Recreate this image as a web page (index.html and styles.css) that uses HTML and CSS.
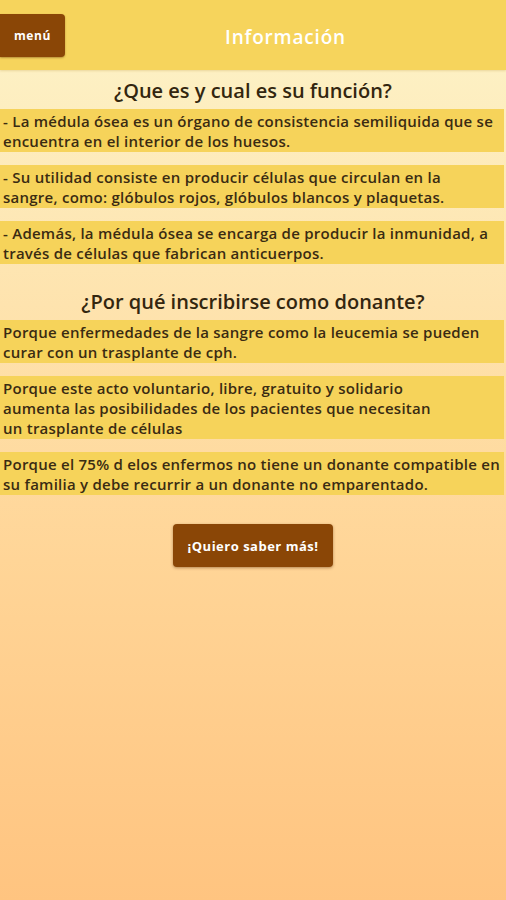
FILE: index.html
```html
<!DOCTYPE html>
<html lang="es">
<head>
<meta charset="utf-8">
<title>Información</title>
<link rel="stylesheet" href="styles.css">
</head>
<body>
<header class="topbar">
  <button class="menu-btn">menú</button>
  <h1 class="title">Información</h1>
</header>
<main class="content">
  <h2 class="section-title">¿Que es y cual es su función?</h2>
  <div class="cards">
    <p class="card">- La médula ósea es un órgano de consistencia semiliquida que se encuentra en el interior de los huesos.</p>
    <p class="card">- Su utilidad consiste en producir células que circulan en la<br>sangre, como: glóbulos rojos, glóbulos blancos y plaquetas.</p>
    <p class="card">- Además, la médula ósea se encarga de producir la inmunidad, a través de células que fabrican anticuerpos.</p>
  </div>
  <h2 class="section-title second">¿Por qué inscribirse como donante?</h2>
  <div class="cards">
    <p class="card">Porque enfermedades de la sangre como la leucemia se pueden curar con un trasplante de cph.</p>
    <p class="card">Porque este acto voluntario, libre, gratuito y solidario<br>aumenta las posibilidades de los pacientes que necesitan<br>un trasplante de células</p>
    <p class="card">Porque el 75% d elos enfermos no tiene un donante compatible en su familia y debe recurrir a un donante no emparentado.</p>
  </div>
  <div class="actions">
    <button class="more-btn">¡Quiero saber más!</button>
  </div>
</main>
</body>
</html>
```

FILE: styles.css
```css
* { box-sizing: border-box; }
html, body { margin: 0; padding: 0; }
body {
  width: 506px;
  min-height: 900px;
  font-family: "Open Sans", "Noto Sans", sans-serif;
  color: #3a2b12;
  background: linear-gradient(to bottom, #fdf0c3 70px, #ffd597 560px, #ffc480 900px);
}
.topbar {
  height: 70px;
  background: #f6d45c;
  display: flex;
  align-items: flex-start;
  box-shadow: 0 1px 2px rgba(180, 140, 40, 0.25);
}
.menu-btn {
  margin-top: 14px;
  width: 65px;
  height: 43px;
  border: none;
  border-radius: 0 4px 4px 0;
  background: #8a4606;
  color: #fff;
  font-family: "Open Sans", sans-serif;
  font-weight: 700;
  font-size: 12px;
  letter-spacing: 0.6px;
  padding: 0;
  box-shadow: 0 1px 2px rgba(90, 40, 0, 0.4);
}
.title {
  flex: 1;
  margin: 0;
  line-height: 74px;
  text-align: center;
  color: #fff;
  font-weight: 600;
  font-size: 19px;
  letter-spacing: 0.8px;
}
.content {
  padding-top: 7px;
}
.section-title {
  margin: 0 0 4px;
  text-align: center;
  font-size: 20px;
  line-height: 28px;
  font-weight: 600;
  color: #33260f;
}
.section-title.second {
  margin-top: 24px;
}
.cards {
  display: flex;
  flex-direction: column;
  gap: 13px;
}
.card {
  margin: 0 2px 0 0;
  background: #f6d35a;
  padding: 2px 3px 1px;
  font-size: 15px;
  line-height: 20px;
  font-weight: 600;
  letter-spacing: 0.25px;
  color: #3a2b12;
}
.actions {
  display: flex;
  justify-content: center;
  margin-top: 29px;
}
.more-btn {
  width: 160px;
  height: 43px;
  border: none;
  border-radius: 4px;
  background: #8a4606;
  color: #fff;
  font-family: "Open Sans", sans-serif;
  font-weight: 700;
  font-size: 13px;
  letter-spacing: 0.5px;
  box-shadow: 0 1px 3px rgba(90, 40, 0, 0.45);
}
```
